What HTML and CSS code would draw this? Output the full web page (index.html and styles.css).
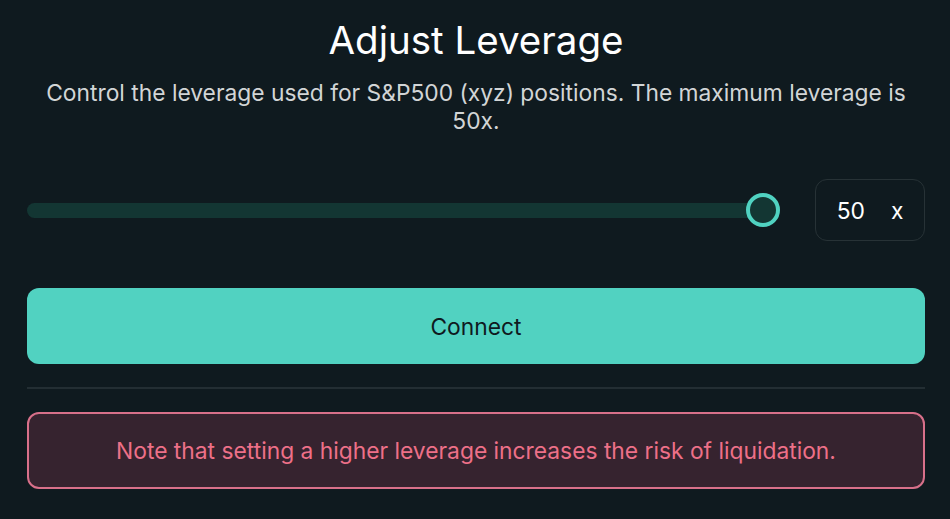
FILE: index.html
```html
<!DOCTYPE html>
<html>
<head>
    <title>Adjust Leverage</title>
    <link rel="stylesheet" href="styles.css">
</head>

<body>
    <div class="modal">
        <h1>Adjust Leverage</h1>
        <p class="desc">Control the leverage used for S&amp;P500 (xyz) positions. The maximum leverage is 50x.</p>

        <div class="slider-row">
            <div class="track">
                <div class="thumb"></div>
            </div>
            <div class="lev-box">
                <span class="lev-value">50</span>
                <span class="lev-unit">x</span>
            </div>
        </div>

        <button class="connect">Connect</button>

        <div class="divider"></div>

        <div class="warning">Note that setting a higher leverage increases the risk of liquidation.</div>
    </div>
</body>
</html>
```

FILE: styles.css
```css
body {
    font-family: Inter, "Noto Sans", sans-serif;
    margin: 0;
    padding: 0;
    background-color: #0f1a1f;
    color: #fff;
}
.modal {
    padding: 16px 25px 0 27px;
    display: flex;
    flex-direction: column;
}
h1 {
    margin: 0;
    font-size: 38.5px;
    font-weight: 400;
    line-height: 48px;
    text-align: center;
}
.desc {
    margin: 15px 0 0;
    font-size: 22.8px;
    line-height: 28px;
    color: #d2d5d6;
    text-align: center;
}
.slider-row {
    display: flex;
    align-items: center;
    margin-top: 44px;
}
.track {
    flex: 1;
    height: 15px;
    margin-right: 52px;
    border-radius: 8px;
    background-color: #133633;
    position: relative;
}
.thumb {
    position: absolute;
    right: -17px;
    top: 50%;
    width: 26px;
    height: 26px;
    margin-top: -17.5px;
    border: 4.5px solid #50d2c1;
    border-radius: 50%;
    background-color: #133633;
}
.lev-box {
    width: 110px;
    height: 62px;
    box-sizing: border-box;
    border: 1px solid #273236;
    border-radius: 12px;
    display: flex;
    align-items: center;
    justify-content: center;
    gap: 26px;
    font-size: 22.8px;
    color: #fff;
}
.connect {
    margin-top: 47px;
    height: 76px;
    border: none;
    border-radius: 12px;
    background-color: #51d2c1;
    color: #0f1a1f;
    font-family: inherit;
    font-size: 22.8px;
    cursor: pointer;
}
.divider {
    margin-top: 23px;
    height: 2px;
    background-color: #232e33;
}
.warning {
    margin-top: 23px;
    height: 77px;
    box-sizing: border-box;
    border: 2px solid #d8708a;
    border-radius: 12px;
    background-color: #36232f;
    color: #ed7088;
    font-size: 22.8px;
    display: flex;
    align-items: center;
    justify-content: center;
}
```
